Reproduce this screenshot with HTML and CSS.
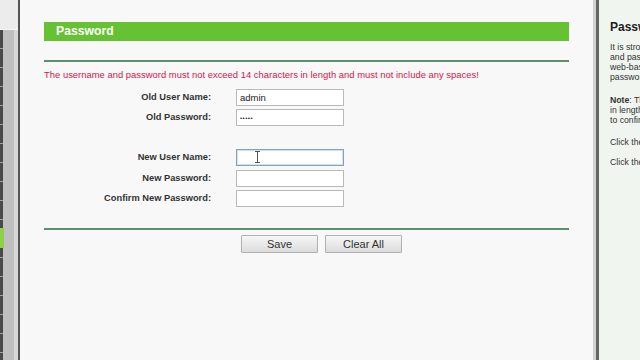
FILE: index.html
```html
<!DOCTYPE html>
<html>
<head>
<meta charset="utf-8">
<title>Password</title>
<link rel="stylesheet" href="styles.css">
</head>
<body>
<div class="menu">
  <div class="menu-top"></div>
  <div class="menu-body">
    <div class="menu-edge"></div>
    <div class="menu-active"></div>
  </div>
</div>
<div class="main">
  <div class="title-bar">Password</div>
  <div class="rule"></div>
  <p class="warn">The username and password must not exceed 14 characters in length and must not include any spaces!</p>
  <div class="form">
    <label class="lbl">Old User Name:</label>
    <div class="field"><input class="inp" type="text" value="admin"></div>
    <label class="lbl">Old Password:</label>
    <div class="field"><input class="inp dots" type="text" value="•••••"></div>
    <div class="spacer"></div>
    <label class="lbl">New User Name:</label>
    <div class="field"><input class="inp focus" type="text" value=""><span class="ibeam"></span></div>
    <label class="lbl">New Password:</label>
    <div class="field"><input class="inp" type="text" value=""></div>
    <label class="lbl">Confirm New Password:</label>
    <div class="field"><input class="inp" type="text" value=""></div>
  </div>
  <div class="rule rule-bottom"></div>
  <div class="buttons">
    <button class="btn">Save</button>
    <button class="btn">Clear All</button>
  </div>
</div>
<div class="sep"></div>
<div class="help">
  <h2 class="help-title">Password</h2>
  <p class="help-p p1">It is strongly recommended that you change the factory default user name<br>and password of the device. All users who try to access the device's<br>web-based utility will be prompted for the device's user name and<br>password.</p>
  <p class="help-p p2"><b>Note</b>: The user name and password must not exceed 14 characters<br>in length and must not include any spaces. Enter the new password twice<br>to confirm it.</p>
  <p class="help-p p3">Click the <b>Save</b> button when finished.</p>
  <p class="help-p p4">Click the <b>Clear All</b> button to clear all.</p>
</div>
</body>
</html>
```

FILE: styles.css
```css
html, body {
  margin: 0;
  padding: 0;
  width: 640px;
  height: 360px;
  overflow: hidden;
}
body {
  display: flex;
  font-family: "Liberation Sans", Arial, sans-serif;
  background: #f7f7f7;
  color: #333;
}
.menu {
  width: 18px;
  flex: none;
  display: flex;
  flex-direction: column;
  border-right: 2px solid #555;
}
.menu-top {
  height: 29px;
  background: #ececec;
  border-bottom: 1px solid #f8f8f8;
}
.menu-body {
  flex: 1;
  position: relative;
  background: linear-gradient(to right, #bfbfbf 0, #bfbfbf 14px, #d8d8d8 14px, #d8d8d8 18px);
}
.menu-edge {
  position: absolute;
  left: 0;
  top: 0;
  bottom: 0;
  width: 3px;
  background: repeating-linear-gradient(to bottom, #4a4a4a 0, #4a4a4a 18px, #a0a0a0 18px, #a0a0a0 19px);
}
.menu-active {
  position: absolute;
  left: 0;
  top: 198px;
  width: 4px;
  height: 20px;
  background: #8fd04a;
}
.main {
  width: 525px;
  flex: none;
  padding: 22px 24px 0;
  background: #f8f8f8;
}
.title-bar {
  height: 19px;
  line-height: 19px;
  background: #66c133;
  color: #fff;
  font-weight: bold;
  font-size: 12.2px;
  padding-left: 12px;
}
.rule {
  height: 2px;
  margin-top: 19px;
  background: #5f8e6e;
}
.warn {
  margin: 7px 0 0;
  font-size: 9.45px;
  line-height: 12px;
  color: #d0184a;
}
.form {
  display: grid;
  grid-template-columns: 167px 108px;
  grid-template-rows: 20px 20px 20px 21px 20px 20px;
  column-gap: 25px;
  margin-top: 8px;
}
.lbl {
  text-align: right;
  font-weight: bold;
  font-size: 9.3px;
  line-height: 17px;
  color: #333;
}
.spacer {
  grid-column: 1 / 3;
}
.field {
  position: relative;
}
.inp {
  box-sizing: border-box;
  display: block;
  width: 108px;
  height: 17px;
  margin: 0;
  padding: 0 3px;
  border: 1px solid #b9b9b9;
  background: #fff;
  font-family: "Liberation Sans", Arial, sans-serif;
  font-size: 9.5px;
  color: #222;
  outline: none;
}
.dots {
  font-size: 6px;
  letter-spacing: 0.5px;
}
.focus {
  border-color: #8aa0b8;
  box-shadow: inset 0 0 0 1px #d6e0ea;
}
.ibeam {
  position: absolute;
  left: 19px;
  top: 2px;
  width: 5px;
  height: 12px;
  border-top: 1px solid #555;
  border-bottom: 1px solid #555;
  box-sizing: border-box;
}
.ibeam::after {
  content: "";
  position: absolute;
  left: 2px;
  top: 0;
  width: 1px;
  height: 10px;
  background: #555;
}
.rule-bottom {
  margin-top: 18px;
}
.buttons {
  display: flex;
  gap: 7px;
  margin-top: 5px;
  padding-left: 197px;
}
.btn {
  width: 77px;
  height: 18px;
  padding: 0;
  border: 1px solid #b0b0b0;
  border-radius: 1px;
  background: linear-gradient(to bottom, #f6f6f6, #dcdcdc);
  font-family: "Liberation Sans", Arial, sans-serif;
  font-size: 11px;
  color: #333;
}
.sep {
  width: 6px;
  flex: none;
  background: linear-gradient(to right, #d2d2d2 0, #d2d2d2 3px, #666 3px, #666 6px);
}
.help {
  flex: none;
  width: 260px;
  padding: 0 0 0 11px;
  background: #f0f5f0;
  color: #333;
}
.help-title {
  margin: 20px 0 0;
  font-size: 12px;
  line-height: 14px;
  font-weight: bold;
  color: #222;
}
.help-p {
  margin: 0;
  font-size: 8.7px;
  line-height: 10px;
  white-space: nowrap;
}
.p1 { margin-top: 8px; }
.p2 { margin-top: 13px; }
.p3 { margin-top: 12px; }
.p4 { margin-top: 10px; }
```
